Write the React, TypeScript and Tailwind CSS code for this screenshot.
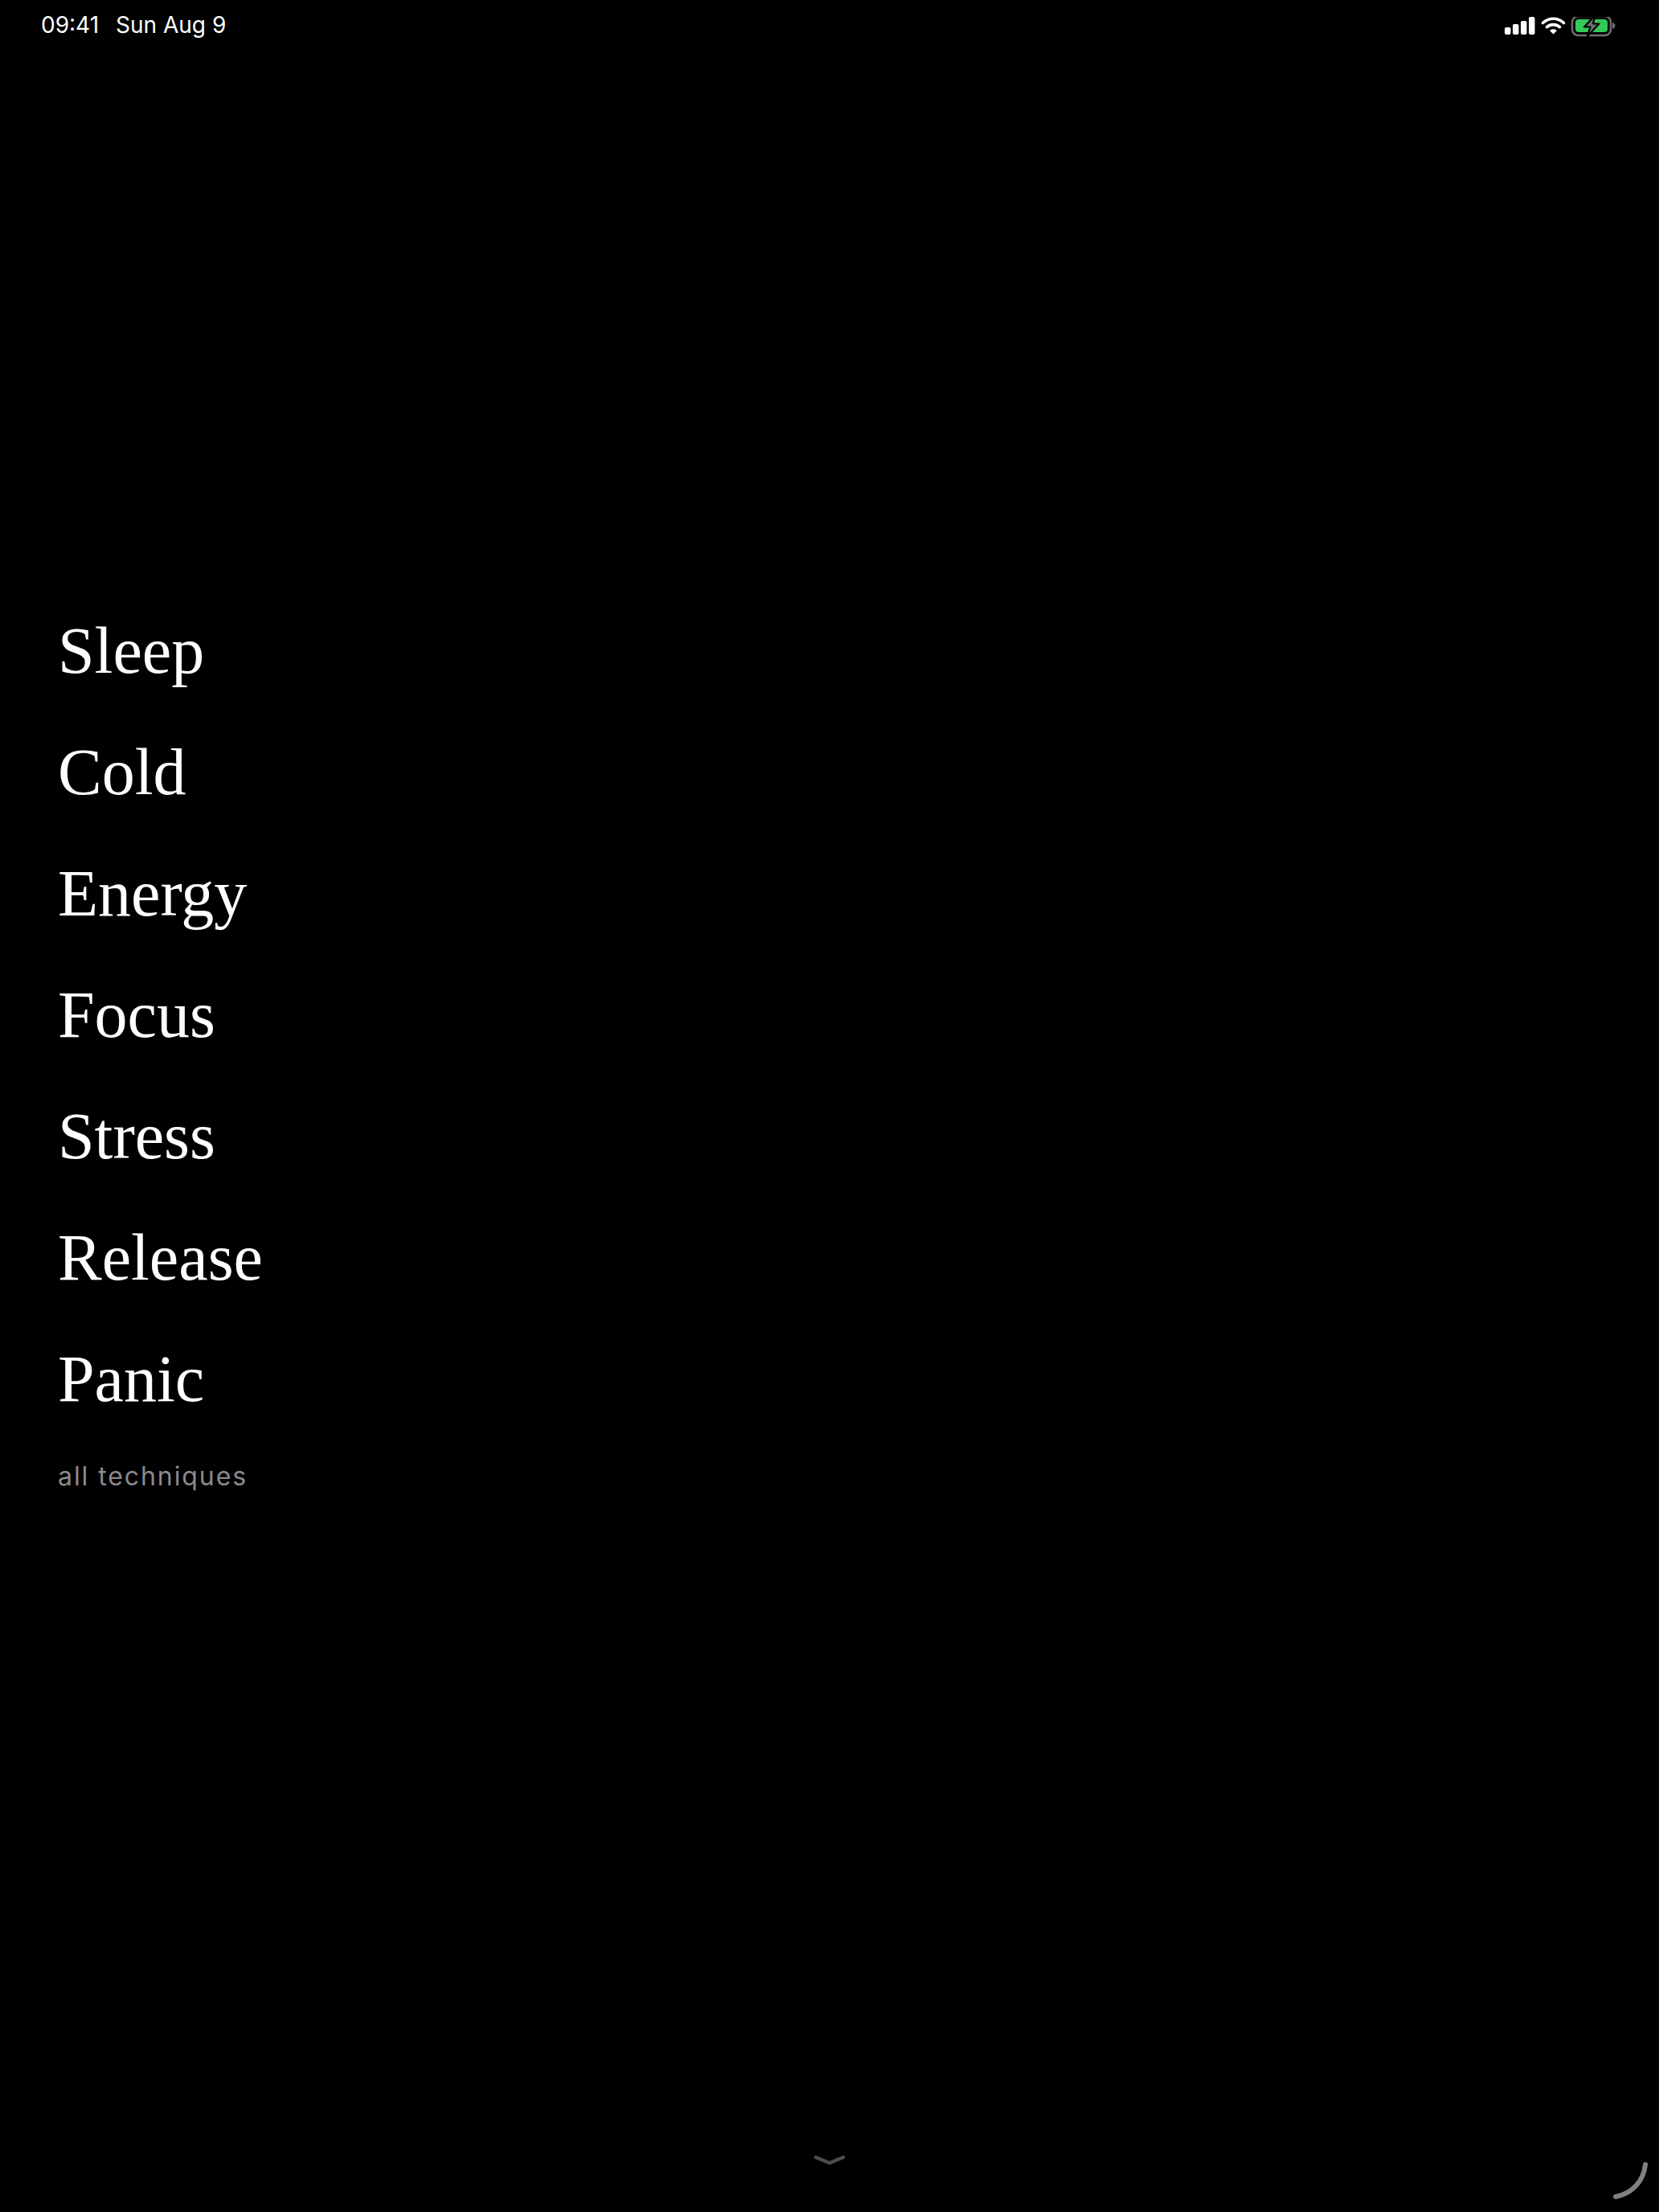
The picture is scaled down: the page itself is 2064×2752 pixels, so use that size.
import React from 'react';

const techniques = ['Sleep', 'Cold', 'Energy', 'Focus', 'Stress', 'Release', 'Panic'];

function StatusIcons() {
    return (
        <svg width="140" height="30" viewBox="0 0 140 30" fill="none" className="block">
            {/* signal */}
            <rect x="0" y="13" width="7.5" height="9" rx="2" fill="#fff" />
            <rect x="10" y="9" width="7.5" height="13" rx="2" fill="#fff" />
            <rect x="20" y="5" width="7.5" height="17" rx="2" fill="#fff" />
            <rect x="30" y="0" width="7.5" height="22" rx="2" fill="#fff" />
            {/* wifi */}
            <path d="M47.5 7.5 C55 0.5 66 0.5 73.5 7.5" stroke="#fff" strokeWidth="3.6" strokeLinecap="round" />
            <path d="M52.5 12.6 C57 8.6 64 8.6 68.5 12.6" stroke="#fff" strokeWidth="3.6" strokeLinecap="round" />
            <path d="M56 17 C58.5 14.8 62.5 14.8 65 17 L60.5 21.5 Z" fill="#fff" />
            {/* battery */}
            <rect x="84" y="-1" width="48" height="24" rx="7.5" stroke="#6e6e70" strokeWidth="2.5" />
            <rect x="88" y="3" width="40" height="16" rx="4" fill="#34c759" />
            <path d="M134 7 C136.5 8 137.5 9.5 137.5 11 C137.5 12.5 136.5 14 134 15 Z" fill="#6e6e70" />
            <path d="M112.5 -2 L99 12.5 H106.5 L103 24 L117.5 8.5 H110 Z" fill="#6e6e70" stroke="#000" strokeWidth="2.2" strokeLinejoin="round" />
        </svg>
    );
}

export default function App() {
    return (
        <div className="relative flex flex-col w-[2064px] h-[2752px] bg-black overflow-hidden font-['Inter',sans-serif]">
            <div className="flex items-start justify-between h-[21px] mt-[21px] pl-[51px] pr-[52px]">
                <div className="flex gap-[21px] text-[28px] leading-[21px] text-white">
                    <span>09:41</span>
                    <span>Sun Aug 9</span>
                </div>
                <StatusIcons />
            </div>

            <div className="flex flex-col items-start mt-[722px] pl-[72px]">
                {techniques.map((name) => (
                    <div key={name} className="h-[151px] font-['Liberation_Serif',serif] text-[82px] leading-[92px] text-white">
                        {name}
                    </div>
                ))}
                <div className="mt-[-4px] text-[32px] leading-[40px] tracking-[0.06em] text-[#8a8a8e]">
                    all techniques
                </div>
            </div>

            <div className="flex justify-center mt-auto mb-[58px]">
                <svg width="40" height="13" viewBox="0 0 40 13" fill="none">
                    <path d="M3 3 L20 10 L37 3" stroke="#4c4c4c" strokeWidth="4.5" strokeLinecap="round" strokeLinejoin="round" />
                </svg>
            </div>

            <svg width="60" height="60" viewBox="0 0 60 60" fill="none" className="absolute right-[6px] bottom-[6px]">
                <path d="M49 7 C47 27 33 43 12 47" stroke="#808080" strokeWidth="6" strokeLinecap="round" />
            </svg>
        </div>
    );
}
